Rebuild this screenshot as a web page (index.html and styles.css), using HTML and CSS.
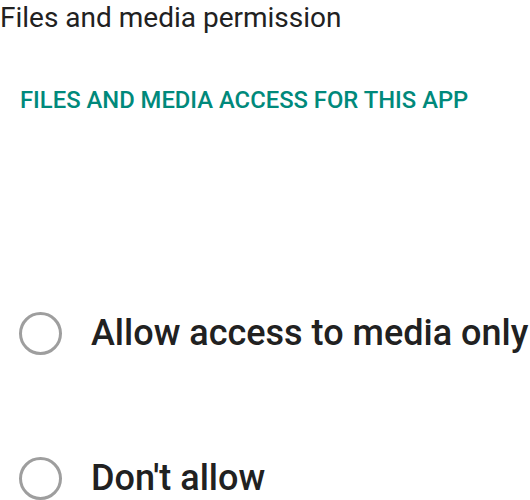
FILE: index.html
```html
<!DOCTYPE html>
<html>
<head>
<meta charset="utf-8">
<link rel="stylesheet" href="styles.css">
</head>
<body>
<div class="page">
  <h1 class="title">Files and media permission</h1>
  <h2 class="section">FILES AND MEDIA ACCESS FOR THIS APP</h2>
  <div class="options">
    <label class="option"><span class="radio"></span><span class="label">Allow access to media only</span></label>
    <label class="option"><span class="radio"></span><span class="label">Don't allow</span></label>
  </div>
</div>
</body>
</html>
```
FILE: styles.css
```css
html, body { margin: 0; padding: 0; background: #fff; }
body { font-family: Roboto, "Noto Sans", sans-serif; width: 530px; height: 500px; overflow: hidden; }
.page { display: flex; flex-direction: column; }
.title { margin: 0; font-weight: 400; font-size: 28px; line-height: 36px; color: #212121; }
.section { margin: 49px 0 0 20px; font-weight: 500; font-size: 23.8px; line-height: 30px; color: #00897b; }
.options { display: flex; flex-direction: column; margin-top: 196px; gap: 101px; }
.option { display: flex; align-items: center; height: 44px; }
.radio { box-sizing: border-box; width: 43px; height: 43px; border: 3px solid #9e9e9e; border-radius: 50%; margin-left: 19px; margin-right: 29px; flex: none; }
.label { font-size: 36px; font-weight: 500; color: #212121; white-space: nowrap; }
```
